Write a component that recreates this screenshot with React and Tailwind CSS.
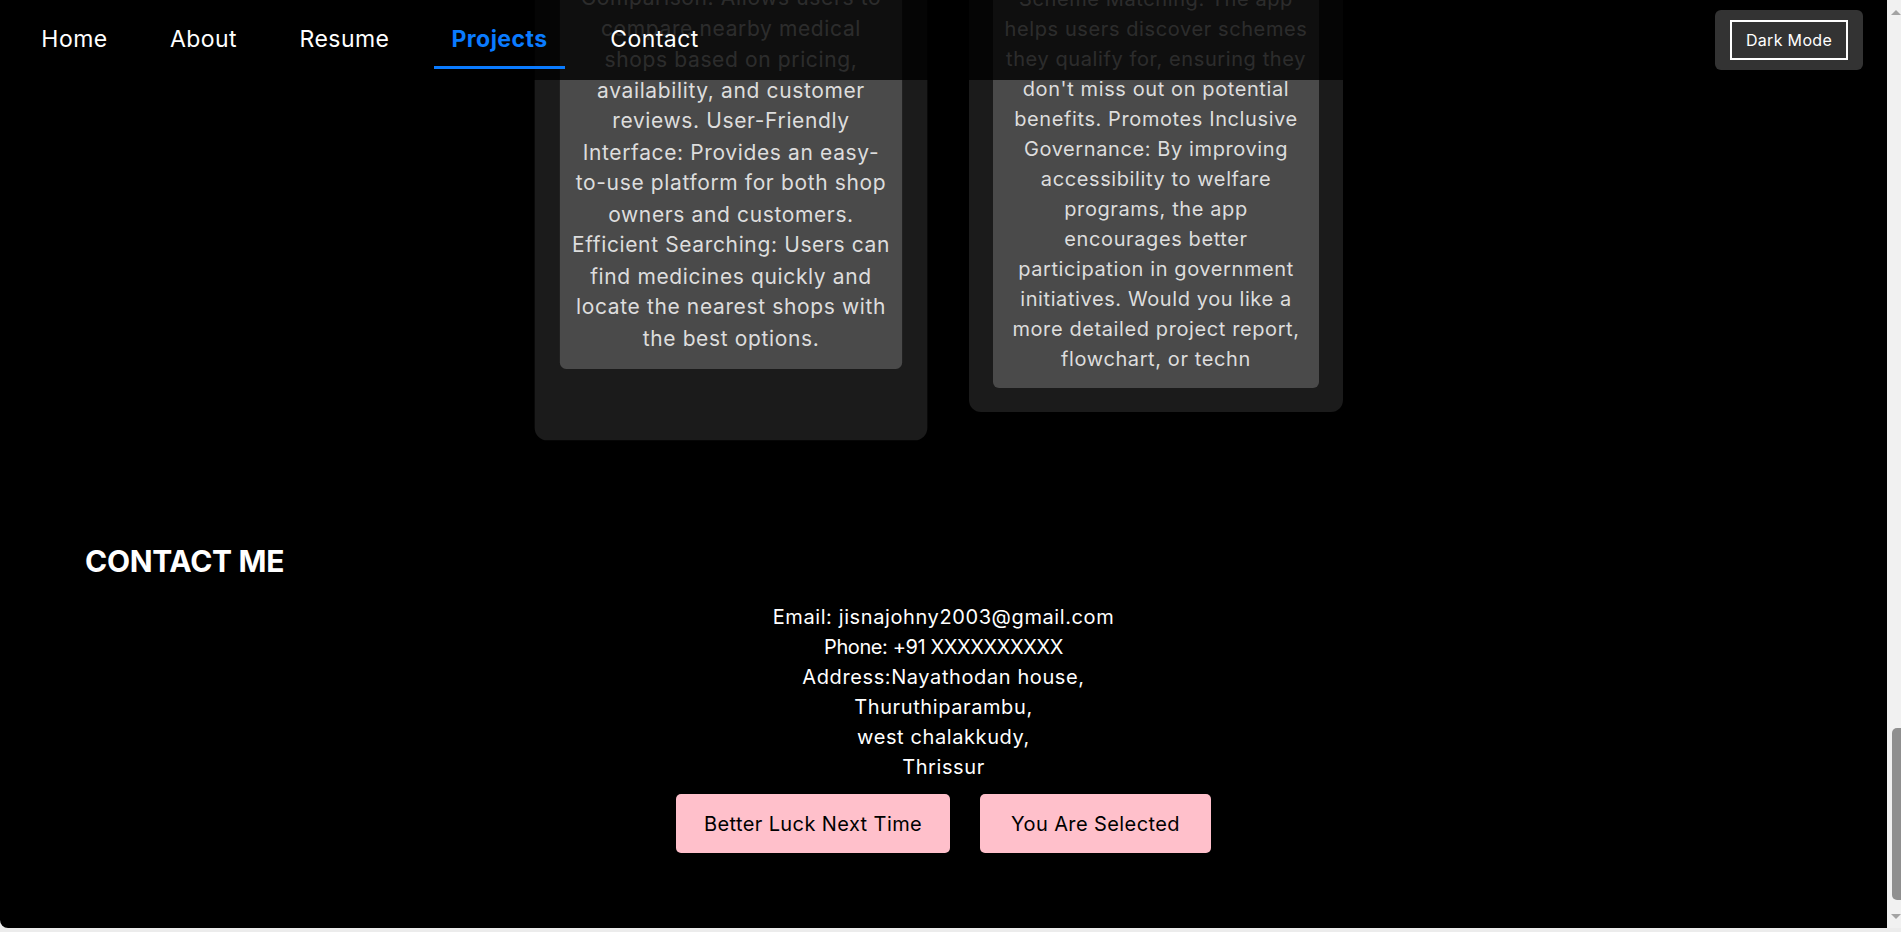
import React from "react";

const leftLines = [
  "Comparison: Allows users to",
  "compare nearby medical",
  "shops based on pricing,",
  "availability, and customer",
  "reviews. User-Friendly",
  "Interface: Provides an easy-",
  "to-use platform for both shop",
  "owners and customers.",
  "Efficient Searching: Users can",
  "find medicines quickly and",
  "locate the nearest shops with",
  "the best options.",
];

const rightLines = [
  "Scheme Matching: The app",
  "helps users discover schemes",
  "they qualify for, ensuring they",
  "don't miss out on potential",
  "benefits. Promotes Inclusive",
  "Governance: By improving",
  "accessibility to welfare",
  "programs, the app",
  "encourages better",
  "participation in government",
  "initiatives. Would you like a",
  "more detailed project report,",
  "flowchart, or techn",
];

const navItems = [
  { label: "Home", w: "w-[103px]" },
  { label: "About", w: "w-[103px]" },
  { label: "Resume", w: "w-[127px]" },
  { label: "Projects", w: "w-[131px]", active: true },
  { label: "Contact", w: "w-[127px]" },
];

function Card({ title, lines, hovered }) {
  return (
    <div
      className={
        "w-[374px] shrink-0 rounded-[12px] bg-[#1b1b1b] px-[24px] pt-[24px] " +
        (hovered ? "pb-[68px] scale-[1.05]" : "pb-[24px]")
      }
    >
      <div
        className={
          "flex items-center justify-center text-[24px] font-semibold text-white " +
          (hovered ? "h-[99px]" : "h-[93px]")
        }
      >
        {title}
      </div>
      <div
        className={
          "rounded-[6px] bg-[#4a4a4a] pb-[14px] pt-[14px] text-center text-[20px] tracking-[0.03em] text-[#dddddd] " +
          (hovered ? "leading-[29.5px]" : "leading-[30px]")
        }
      >
        {lines.map((l, i) => (
          <div key={i} className="whitespace-nowrap">
            {l}
          </div>
        ))}
      </div>
    </div>
  );
}

export default function App() {
  return (
    <div className="flex h-[932px] w-[1901px] flex-col overflow-hidden bg-[#ececec] font-[family-name:Inter,sans-serif]">
      <div className="flex h-[928px] shrink-0">
        <main className="relative flex h-[928px] flex-1 flex-col justify-end overflow-hidden rounded-bl-[8px] bg-black">
          {/* fixed header overlay */}
          <header className="absolute left-0 right-0 top-0 z-10 flex h-[80px] items-start justify-between bg-black/80">
            <nav className="flex gap-[26px] pl-[23px]">
              {navItems.map((n) => (
                <a
                  key={n.label}
                  className={
                    n.w +
                    " block border-b-[3px] pb-[12px] pt-[24px] text-center text-[23px] leading-[30px] tracking-[0.02em] " +
                    (n.active
                      ? "border-[#0a7bff] font-bold text-[#0a7bff]"
                      : "border-transparent text-white")
                  }
                >
                  {n.label}
                </a>
              ))}
            </nav>
            <div className="mr-[24px] self-center rounded-[6px] bg-[#333333] px-[15px] py-[10px]">
              <button className="flex h-[40px] w-[118px] items-center justify-center border-2 border-white text-[16px] tracking-[0.02em] text-white">
                Dark Mode
              </button>
            </div>
          </header>

          {/* projects */}
          <section className="shrink-0 pb-[116px]">
            <h2 className="pb-[40px] text-center text-[32px] font-bold text-white">PROJECTS</h2>
            <div className="flex items-start justify-center gap-[51px]">
              <Card title="MediFind" lines={leftLines} hovered />
              <Card title="Scheme Finder" lines={rightLines} />
            </div>
          </section>

          {/* contact */}
          <section className="shrink-0 pb-[75px]">
            <h2 className="mb-[22px] pl-[85px] text-[30px] font-bold leading-[38px] tracking-[-0.01em] text-white">
              CONTACT ME
            </h2>
            <div className="text-center text-[20px] leading-[30px] tracking-[0.03em] text-white">
              <div>Email: jisnajohny2003@gmail.com</div>
              <div className="tracking-[-0.02em]">Phone: +91 XXXXXXXXXX</div>
              <div>Address:Nayathodan house,</div>
              <div>Thuruthiparambu,</div>
              <div>west chalakkudy,</div>
              <div>Thrissur</div>
            </div>
            <div className="mt-[12px] flex justify-center gap-[30px]">
              <button className="h-[59px] w-[274px] rounded-[5px] bg-[#ffc0cb] text-[20px] tracking-[0.02em] text-black">
                Better Luck Next Time
              </button>
              <button className="h-[59px] w-[231px] rounded-[5px] bg-[#ffc0cb] text-[20px] tracking-[0.02em] text-black">
                You Are Selected
              </button>
            </div>
          </section>
        </main>

        {/* browser scrollbar */}
        <div className="flex w-[14px] shrink-0 flex-col overflow-hidden bg-[#f1f1f1]">
          <div className="flex h-[24px] items-center pl-[4px]">
            <div className="h-0 w-0 border-x-[5px] border-b-[5px] border-x-transparent border-b-[#a3a3a3]" />
          </div>
          <div className="flex-1">
            <div className="ml-[5px] mt-[704px] h-[172px] w-[14px] rounded-[5px] bg-[#8f8f8f]" />
          </div>
          <div className="flex h-[24px] items-center pl-[4px]">
            <div className="h-0 w-0 border-x-[5px] border-t-[5px] border-x-transparent border-t-[#a3a3a3]" />
          </div>
        </div>
      </div>
      <div className="h-[4px] shrink-0 bg-[#ececec]" />
    </div>
  );
}
